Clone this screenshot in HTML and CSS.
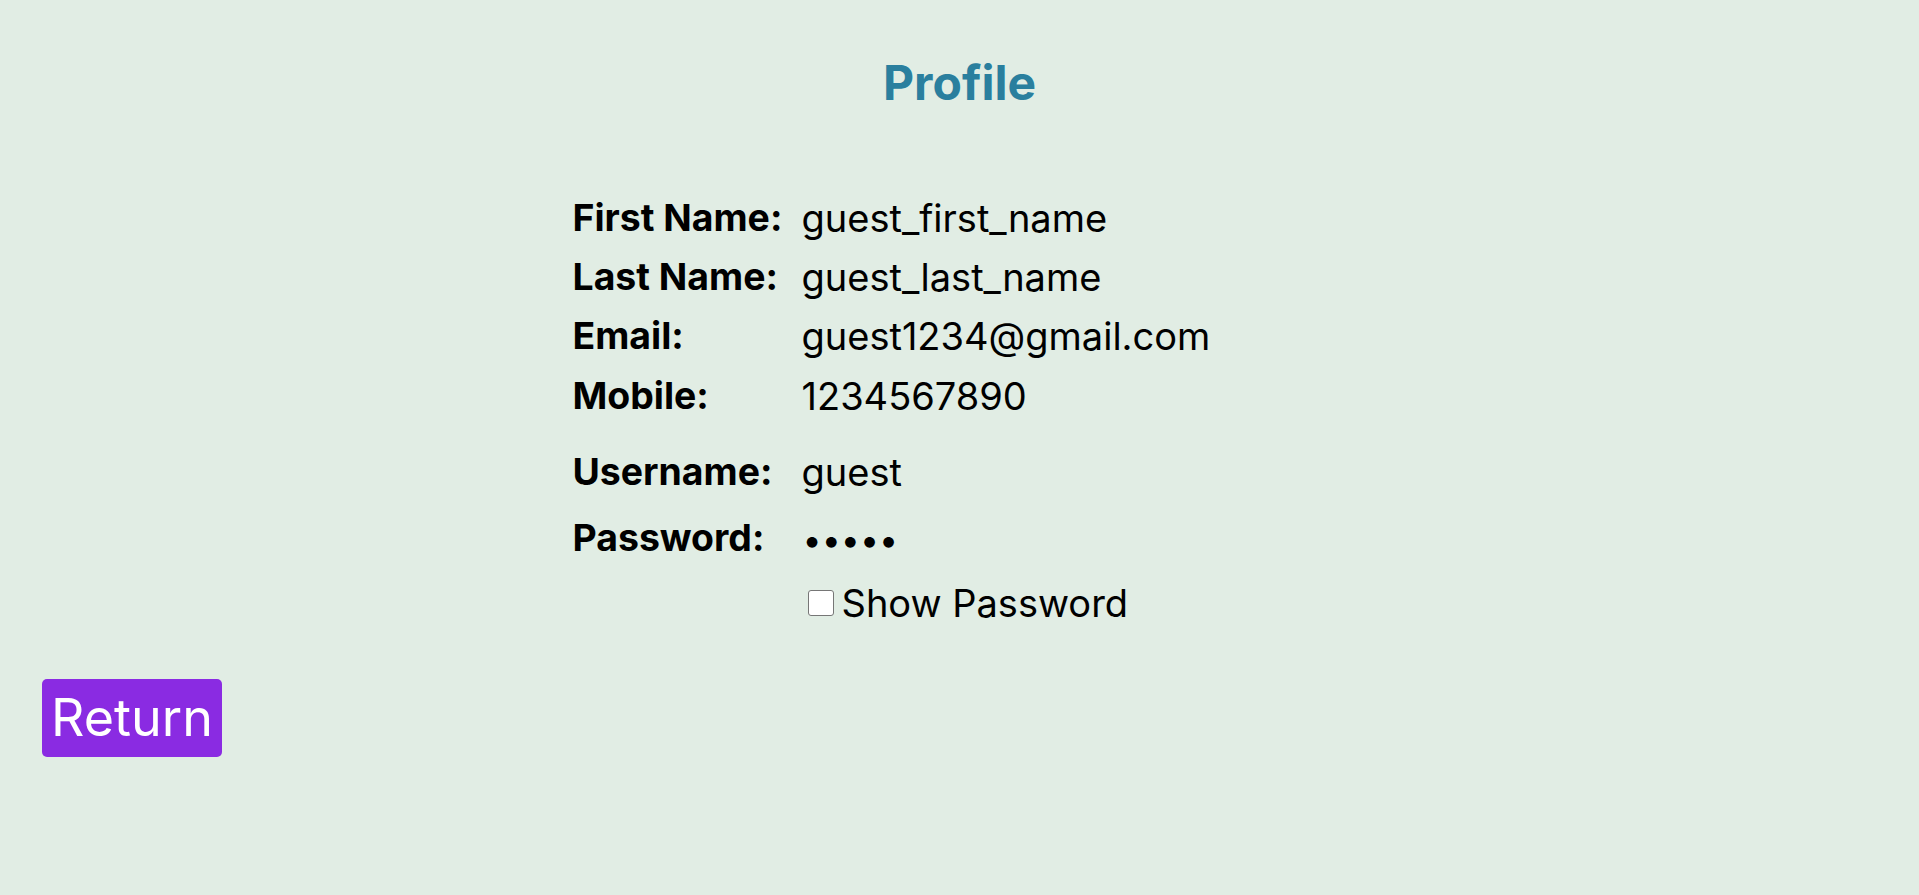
FILE: index.html
```html
<!DOCTYPE html>
<html lang="en">
<head>
<meta charset="utf-8">
<title>Profile</title>
<link rel="stylesheet" href="styles.css">
</head>
<body>
<div class="page">
  <h1 class="title">Profile</h1>
  <div class="profile">
    <div class="grid">
      <div class="label">First Name:</div><div class="value">guest_first_name</div>
      <div class="label">Last Name:</div><div class="value">guest_last_name</div>
      <div class="label">Email:</div><div class="value">guest1234@gmail.com</div>
      <div class="label">Mobile:</div><div class="value">1234567890</div>
    </div>
    <div class="grid grid-account">
      <div class="label">Username:</div><div class="value">guest</div>
      <div class="label">Password:</div><div class="value"><span class="dots">•••••</span></div>
      <div class="label"></div>
      <label class="show"><span class="check"></span>Show Password</label>
    </div>
  </div>
  <div class="actions">
    <button class="return">Return</button>
  </div>
</div>
</body>
</html>
```
FILE: styles.css
```css
html, body {
  margin: 0;
  padding: 0;
  background: #e1ede4;
}
body {
  font-family: Inter, "Noto Sans", sans-serif;
  color: #000;
}
.page {
  padding: 8px;
}
.title {
  margin: 46px 0 0;
  text-align: center;
  font-size: 48px;
  font-weight: 700;
  color: #2a7f9e;
  line-height: 58px;
}
.profile {
  width: 780px;
  margin: 83px auto 0;
  padding-left: 3px;
  box-sizing: border-box;
}
.grid {
  display: grid;
  grid-template-columns: 229px auto;
  row-gap: 13.2px;
  font-size: 38px;
  line-height: 46px;
}
.label {
  font-weight: 700;
  font-size: 37.4px;
}
.grid-account {
  margin-top: 30px;
  row-gap: 20px;
}
.grid-account .show {
  margin-top: -3px;
}
.dots {
  font-size: 34px;
  padding-left: 1px;
}
.show {
  display: flex;
  align-items: center;
  gap: 8px;
  padding-left: 6px;
}
.check {
  width: 24px;
  height: 24px;
  border: 1px solid #767676;
  border-radius: 3px;
  background: #fff;
}
.actions {
  padding-left: 34px;
  margin-top: 53px;
}
.return {
  font-family: Inter, "Noto Sans", sans-serif;
  font-size: 52px;
  line-height: 66px;
  padding: 6px 9px;
  color: #fff;
  background: #8a2be2;
  border: none;
  border-radius: 5px;
}
```
